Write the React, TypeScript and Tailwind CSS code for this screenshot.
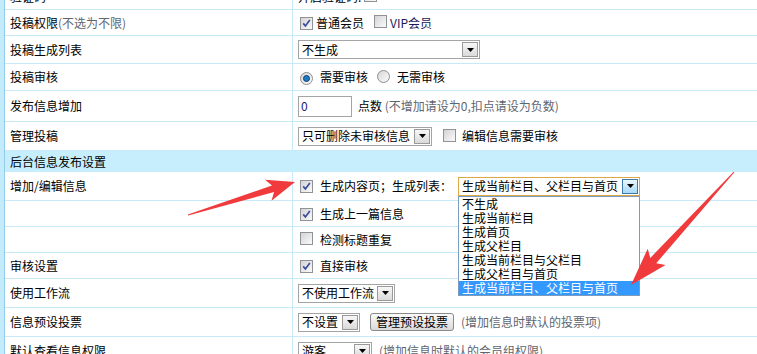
import React from 'react';

const Check: React.FC<{ checked?: boolean }> = ({ checked }) => (
  <span className="inline-flex shrink-0 w-[13px] h-[13px] items-center justify-center border border-[#8f9296] bg-linear-to-br from-[#d4d4d4] to-[#fafafa]">
    {checked && (
      <svg width="9" height="9" viewBox="0 0 9 9">
        <path d="M1.2 4.4 L3.4 6.9 L7.8 1" stroke="#3a4c9c" strokeWidth="1.7" fill="none" />
      </svg>
    )}
  </span>
);

const Radio: React.FC<{ checked?: boolean }> = ({ checked }) => (
  <span className="inline-flex shrink-0 w-[13px] h-[13px] items-center justify-center rounded-full border border-[#8d8d8d] bg-linear-to-br from-[#d6d6d6] to-[#fdfdfd]">
    {checked && <span className="w-[7px] h-[7px] rounded-full bg-[#1f7cc4] border border-[#0b3f73]" />}
  </span>
);

const Caret: React.FC = () => (
  <svg width="7" height="4" viewBox="0 0 7 4">
    <polygon points="0,0 7,0 3.5,4" fill="#000" />
  </svg>
);

const Select: React.FC<{ text: string; className: string; focused?: boolean; children?: React.ReactNode }> = ({
  text,
  className,
  focused,
  children,
}) => (
  <div
    className={`relative shrink-0 h-[19px] flex items-center bg-white border ${
      focused ? 'border-[#dca848]' : 'border-[#a4a4a4]'
    } ${className}`}
  >
    <span className="flex-1 pl-[3px] leading-[14px] whitespace-nowrap overflow-hidden">{text}</span>
    <span
      className={`mr-[1px] w-[16px] h-[15px] flex items-center justify-center border ${
        focused
          ? 'border-[#3d7bad] bg-linear-to-b from-[#eaf6fd] to-[#a7d9f5]'
          : 'border-[#9a9a9a] bg-linear-to-b from-[#f7f7f7] to-[#dadada]'
      }`}
    >
      <Caret />
    </span>
    {children}
  </div>
);

const Row: React.FC<{ label?: React.ReactNode; h: string; children?: React.ReactNode }> = ({ label, h, children }) => (
  <div className={`flex shrink-0 border-b border-[#c8e9f7] ${h}`}>
    <div className="w-[287px] shrink-0 pl-[5px] flex items-center whitespace-nowrap">{label}</div>
    <div className="flex-1 border-l border-[#c8e9f7] pl-[5px] flex items-center whitespace-nowrap">{children}</div>
  </div>
);

const Hint: React.FC<{ children: React.ReactNode }> = ({ children }) => (
  <span className="text-[#5f6670]">{children}</span>
);

const options = [
  '不生成',
  '生成当前栏目',
  '生成首页',
  '生成父栏目',
  '生成当前栏目与父栏目',
  '生成父栏目与首页',
  '生成当前栏目、父栏目与首页',
];

function arrowPoints(
  x1: number,
  y1: number,
  x2: number,
  y2: number,
  headLen: number,
  headW: number,
  neckW: number
) {
  const len = Math.hypot(x2 - x1, y2 - y1);
  const ux = (x2 - x1) / len;
  const uy = (y2 - y1) / len;
  const nx = -uy;
  const ny = ux;
  const bx = x2 - ux * headLen;
  const by = y2 - uy * headLen;
  const kx = bx + ux * 5;
  const ky = by + uy * 5;
  const p = (x: number, y: number) => `${x.toFixed(1)},${y.toFixed(1)}`;
  return [
    p(x1 + nx * 0.5, y1 + ny * 0.5),
    p(kx + (nx * neckW) / 2, ky + (ny * neckW) / 2),
    p(bx + (nx * headW) / 2, by + (ny * headW) / 2),
    p(x2, y2),
    p(bx - (nx * headW) / 2, by - (ny * headW) / 2),
    p(kx - (nx * neckW) / 2, ky - (ny * neckW) / 2),
    p(x1 - nx * 0.5, y1 - ny * 0.5),
  ].join(' ');
}

const App: React.FC = () => {
  return (
    <div className="relative w-[757px] h-[354px] overflow-hidden bg-white flex items-start font-['Noto_Sans_CJK_SC','Liberation_Sans',sans-serif] text-[12px] leading-[14px] text-black">
      <div className="w-[4px] h-full shrink-0 bg-[#c3ebfc] border-r border-[#93cdea] box-content" />
      <div className="flex-1 flex flex-col -mt-[16px]">
        <Row label="验证码" h="h-[26px]">
          开启验证码:
          <span className="ml-[3px]">
            <Check />
          </span>
        </Row>
        <Row
          h="h-[26px]"
          label={
            <>
              投稿权限<Hint>(不选为不限)</Hint>
            </>
          }
        >
          <span className="ml-[2px]">
            <Check checked />
          </span>
          <span className="ml-[3px]">普通会员</span>
          <span className="ml-[10px]">
            <Check />
          </span>
          <span className="ml-[3px] text-[#1c1a5a]">VIP会员</span>
        </Row>
        <Row label="投稿生成列表" h="h-[28px]">
          <Select text="不生成" className="w-[182px]" />
        </Row>
        <Row label="投稿审核" h="h-[27px]">
          <span className="ml-[2px]">
            <Radio checked />
          </span>
          <span className="ml-[7px]">需要审核</span>
          <span className="ml-[9px]">
            <Radio />
          </span>
          <span className="ml-[7px]">无需审核</span>
        </Row>
        <Row label="发布信息增加" h="h-[31px]">
          <div className="w-[54px] h-[21px] border border-[#a4a4a4] flex items-center pl-[2px] text-[#1a1a7a]">0</div>
          <span className="ml-[6px]">点数</span>
          <Hint>&nbsp;(不增加请设为0,扣点请设为负数)</Hint>
        </Row>
        <Row label="管理投稿" h="h-[29px]">
          <Select text="只可删除未审核信息" className="w-[134px]" />
          <span className="ml-[11px]">
            <Check />
          </span>
          <span className="ml-[6px]">编辑信息需要审核</span>
        </Row>
        <div className="h-[21px] shrink-0 bg-[#c7eefc] pl-[5px] flex items-center">后台信息发布设置</div>
        <Row label="增加/编辑信息" h="h-[29px]">
          <span className="ml-[2px]">
            <Check checked />
          </span>
          <span className="ml-[7px] w-[138px] shrink-0">生成内容页；生成列表：</span>
          <Select text="生成当前栏目、父栏目与首页" className="w-[182px] z-10" focused>
            <div className="absolute left-[-1px] top-[18px] w-[182px] border border-[#7c9bbd] bg-white">
              {options.map((o, i) => (
                <div
                  key={o}
                  className={`h-[14px] leading-[14px] pl-[3px] whitespace-nowrap ${
                    i === options.length - 1 ? 'bg-[#3399ff] text-white' : ''
                  }`}
                >
                  {o}
                </div>
              ))}
            </div>
          </Select>
        </Row>
        <Row h="h-[26px]">
          <span className="ml-[2px]">
            <Check checked />
          </span>
          <span className="ml-[7px]">生成上一篇信息</span>
        </Row>
        <Row h="h-[26px]">
          <span className="ml-[2px]">
            <Check />
          </span>
          <span className="ml-[7px]">检测标题重复</span>
        </Row>
        <Row label="审核设置" h="h-[26px]">
          <span className="ml-[2px]">
            <Check checked />
          </span>
          <span className="ml-[7px]">直接审核</span>
        </Row>
        <Row label="使用工作流" h="h-[29px]">
          <Select text="不使用工作流" className="w-[97px]" />
        </Row>
        <Row label="信息预设投票" h="h-[29px]">
          <Select text="不设置" className="w-[62px]" />
          <button className="ml-[10px] h-[18px] px-[5px] rounded-[3px] border border-[#8a8a8a] bg-linear-to-b from-[#fbfbfb] to-[#d9d9d9] leading-[14px]">
            管理预设投票
          </button>
          <span className="ml-[7px]">
            <Hint>(增加信息时默认的投票项)</Hint>
          </span>
        </Row>
        <Row label="默认查看信息权限" h="h-[29px]">
          <Select text="游客" className="w-[74px]" />
          <span className="ml-[7px]">
            <Hint>(增加信息时默认的会员组权限)</Hint>
          </span>
        </Row>
      </div>
      <svg className="absolute inset-0 pointer-events-none z-20" width="757" height="354">
        <polygon points={arrowPoints(188, 215, 295, 182, 28, 22, 7)} fill="#f03a3c" />
        <polygon points={arrowPoints(734, 172, 631, 285, 38, 24, 8)} fill="#f03a3c" />
      </svg>
    </div>
  );
};

export default App;
